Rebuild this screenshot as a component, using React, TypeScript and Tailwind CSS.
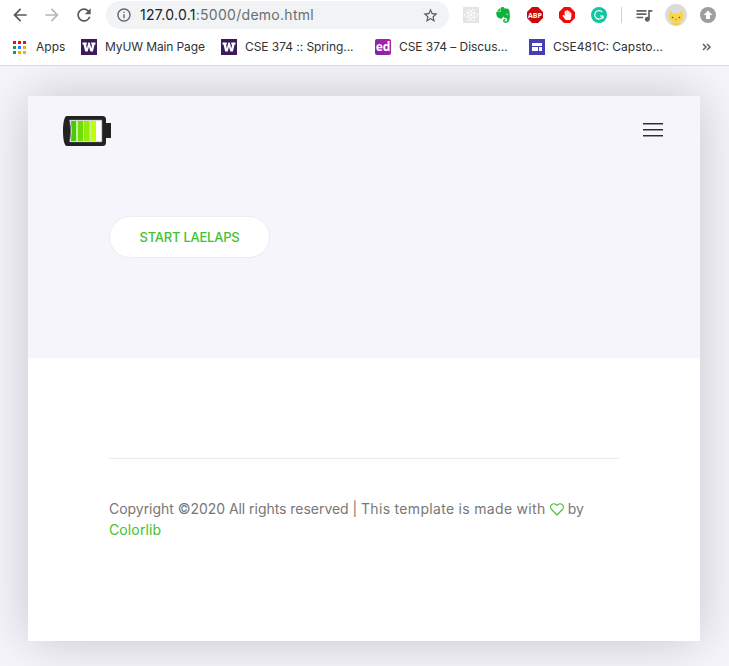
import React from "react";
import {
  MdArrowBack,
  MdArrowForward,
  MdInfoOutline,
  MdQueueMusic,
  MdRefresh,
  MdStarBorder,
} from "react-icons/md";
import { FaReact, FaHandPaper } from "react-icons/fa";
import { SiEvernote } from "react-icons/si";

function UwIcon() {
  return (
    <svg className="size-4 shrink-0" viewBox="0 0 16 16">
      <rect width="16" height="16" fill="#3b1b5c" />
      <path
        d="M1.500 3.500h4.300v2H5l.9 4 1.400-6h1.500l1.500 6 .8-4h-.9v-2h4.300v2h-.9l-1.700 7H9.400L8 7.800l-1.300 4.700H4.200l-1.700-7h-1z"
        fill="#fff"
      />
    </svg>
  );
}

function AppsIcon() {
  const colors = ["#f00b16", "#f00b16", "#f00b16", "#0f9d58", "#1687f8", "#fba80b", "#0f9d58", "#fba80b", "#fba80b"];
  return (
    <div className="grid w-[13px] shrink-0 grid-cols-3 gap-[2px]">
      {colors.map((c, i) => (
        <span key={i} className="size-[3px]" style={{ backgroundColor: c }} />
      ))}
    </div>
  );
}

function EdIcon() {
  return (
    <span className="flex size-4 shrink-0 items-center justify-center rounded-[2px] bg-linear-to-tr from-[#7a22a8] to-[#b51fb0] pb-px font-['Open_Sans',sans-serif] text-[12px] leading-none font-bold tracking-[-0.2px] text-white">
      ed
    </span>
  );
}

function SitesIcon() {
  return (
    <svg className="size-4 shrink-0" viewBox="0 0 16 16">
      <rect width="16" height="16" fill="#443fb4" />
      <path d="M3 4h10v3H3zM3 8h6v4H3zM10 8h3v4h-3z" fill="#fff" />
    </svg>
  );
}

function Bookmark({ icon, label, className }: { icon: React.ReactNode; label: string; className: string }) {
  return (
    <div className={`flex shrink-0 items-center gap-2 ${className}`}>
      {icon}
      <span className="whitespace-nowrap">{label}</span>
    </div>
  );
}

function Battery() {
  return (
    <svg className="h-[30px] w-12" viewBox="0 0 48 30">
      <path d="M4 0h35.500a3.500 3.500 0 0 1 3.500 3.500V7h5v15h-5v4.500a3.500 3.500 0 0 1-3.500 3.500H4C1 30 0 22 0 15S1 0 4 0z" fill="#222" />
      <path d="M6.500 4H39v22H6.500Q9 15 6.500 4z" fill="#fff" stroke="#777" strokeWidth=".6" />
      <path d="M7.500 5H33v20H7.500Q9.500 15 7.500 5z" fill="#c5f1a0" />
      <path d="M8 5h5v20H8Q9.500 15 8 5z" fill="#4bc80b" />
      <path d="M15 5h5v20h-5z" fill="#70dc08" />
      <path d="M21 5h5.500v20H21z" fill="#91ee04" />
      <path d="M28 5h5v20h-5z" fill="#bfff00" />
    </svg>
  );
}

function Heart() {
  return (
    <svg className="inline h-[13px] w-[14px] align-[-2px]" viewBox="0 0 14 13">
      <path
        d="M7 12 1.600 6.500C-.6 4 1 .7 3.900.7 5.400.7 6.400 1.500 7 2.500 7.600 1.500 8.600.7 10.100.7c2.900 0 4.500 3.300 2.300 5.800z"
        fill="none"
        stroke="#43c230"
        strokeWidth="1.100"
        strokeLinejoin="round"
      />
    </svg>
  );
}

function Extensions() {
  return (
    <div className="ml-[14px] flex items-center gap-4">
      <span className="flex size-4 items-center justify-center bg-[#e4e4e4] text-white">
        <FaReact size={14} />
      </span>
      <SiEvernote size={16} color="#0cb33d" />
      <svg className="size-4" viewBox="0 0 16 16">
        <path d="M5 0h6l5 5v6l-5 5H5l-5-5V5z" fill="#cb0909" />
        <text x="8" y="11" textAnchor="middle" fill="#fff" fontSize="7.500" fontWeight="700" textLength="14" lengthAdjust="spacingAndGlyphs" fontFamily="Open Sans, sans-serif">
          ABP
        </text>
      </svg>
      <svg className="size-4" viewBox="0 0 16 16">
        <path d="M5 0h6l5 5v6l-5 5H5l-5-5V5z" fill="#f40909" />
        <FaHandPaper x="3" y="3" size={10} color="#fff" />
      </svg>
      <svg className="size-4" viewBox="0 0 16 16">
        <circle cx="8" cy="8" r="8" fill="#11c5a0" />
        <path d="M11.200 5.200A4.200 4.200 0 1 0 12 9H9M12 8.500v3.200" fill="none" stroke="#fff" strokeWidth="1.200" />
      </svg>
    </div>
  );
}

function CatAvatar() {
  return (
    <svg className="ml-[11px] size-[22px] shrink-0" viewBox="0 0 22 22">
      <circle cx="11" cy="11" r="11" fill="#dcdcdc" />
      <path d="M4.500 6 8 9.500h6L17.500 6l1 7c0 3-3 5.500-7.500 5.500S3.500 16 3.500 13z" fill="#fbd54b" />
      <path d="M6 18.500h10q-1 3-5 3t-5-3z" fill="#f9cf4c" />
      <circle cx="7.500" cy="13.500" r=".8" fill="#5f4426" />
      <circle cx="14.500" cy="13.500" r=".8" fill="#5f4426" />
      <path d="m9.500 15 1.500 1 1.500-1" fill="none" stroke="#d98b32" strokeWidth=".8" />
    </svg>
  );
}

function Browser() {
  return (
    <header className="h-[66px] border-b border-[#d9d9de] bg-white font-['Inter',sans-serif]">
      <div className="flex h-[30px] items-center pl-[10px]">
        <MdArrowBack size={20} color="#55585c" />
        <MdArrowForward className="ml-3" size={20} color="#b8b8b9" />
        <MdRefresh className="ml-3" size={20} color="#55585c" />
        <div className="ml-3 flex h-7 w-[343px] items-center rounded-full bg-[#f1f3f4] pr-[10px] pl-[10px]">
          <MdInfoOutline size={16} color="#5f6368" />
          <span className="ml-2 pb-px text-[14px] leading-5 tracking-[0.28px] text-[#6b6e73]">
            <span className="text-[#202124]">127.0.0.1</span>:5000/demo.html
          </span>
          <MdStarBorder className="ml-auto" size={17} color="#55585c" />
        </div>
        <Extensions />
        <span className="ml-[14px] h-4 w-px bg-[#cfd0d2]" />
        <MdQueueMusic className="ml-3 shrink-0" size={20} color="#5f6368" />
        <CatAvatar />
        <svg className="ml-[13px] size-4 shrink-0" viewBox="0 0 16 16">
          <circle cx="8" cy="8" r="8" fill="#9e9e9e" />
          <path d="m8 3.500 4.500 4.500H10v4H6V8H3.500z" fill="#fff" />
        </svg>
      </div>
      <nav className="flex h-[34px] items-center pl-[13px] text-[12px] text-[#303236]">
        <Bookmark className="w-[68px] gap-[10px]" icon={<AppsIcon />} label="Apps" />
        <Bookmark className="w-[140px] tracking-[-0.12px]" icon={<UwIcon />} label="MyUW Main Page" />
        <Bookmark className="w-[154px] tracking-[-0.05px]" icon={<UwIcon />} label="CSE 374 :: Spring..." />
        <Bookmark className="w-[154px] tracking-[-0.05px]" icon={<EdIcon />} label="CSE 374 – Discus..." />
        <Bookmark className="w-[173px]" icon={<SitesIcon />} label="CSE481C: Capsto..." />
        <svg className="h-2 w-[10px] shrink-0" viewBox="0 0 10 8">
          <path d="m1 1 3 3-3 3m4-6 3 3-3 3" fill="none" stroke="#5f6368" strokeWidth="1.500" />
        </svg>
      </nav>
    </header>
  );
}

export default function App() {
  return (
    <div className="h-[666px] w-[729px] overflow-hidden bg-[#f6f5fc]">
      <Browser />
      <div className="h-[600px] overflow-hidden px-7 pt-[30px]">
        <main className="flex h-[545px] w-[672px] flex-col bg-white shadow-[0_0_50px_rgba(0,0,0,0.2)]">
          <section className="h-[262px] bg-[#f6f5fc]">
            <div className="flex h-[70px] items-center justify-between pr-[37px] pl-[35px]">
              <Battery />
              <button className="flex w-5 flex-col gap-1 pb-[2px]" aria-label="Menu">
                <span className="h-[2px] w-full border-b border-[#99989e] bg-[#2d2b30]" />
                <span className="h-[2px] w-full border-b border-[#99989e] bg-[#2d2b30]" />
                <span className="h-[2px] w-full border-b border-[#99989e] bg-[#2d2b30]" />
              </button>
            </div>
            <button className="mt-[50px] ml-[81px] flex h-[42px] w-[161px] items-center justify-center rounded-full border border-[#ededf0] bg-white pt-px font-['Inter',sans-serif] text-[13px] font-medium tracking-[-0.25px] whitespace-nowrap text-[#43c230]">
              START LAELAPS
            </button>
          </section>
          <footer className="mx-[81px] mt-[100px] border-t border-[#ebebeb] pt-[39px] font-['Inter',sans-serif] text-[14px] leading-[21px] text-[#777]">
            <p className="whitespace-nowrap">
              <span className="tracking-[-0.04px]">Copyright ©2020 All rights reserved | </span>
              <span className="tracking-[0.31px]">This template is made with </span>
              <Heart /> by
            </p>
            <a className="tracking-[0.12px] text-[#43c230]">Colorlib</a>
          </footer>
        </main>
      </div>
    </div>
  );
}
